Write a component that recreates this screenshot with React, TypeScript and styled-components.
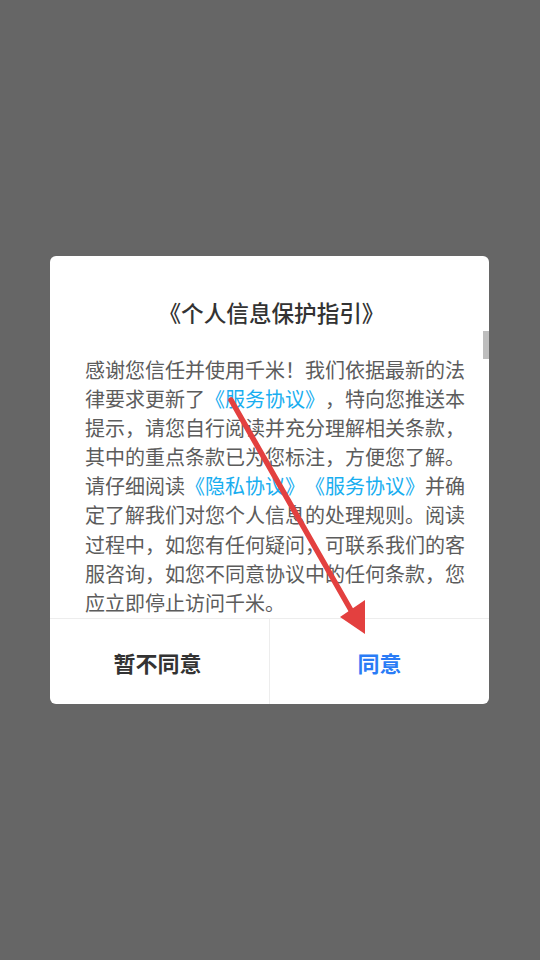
import React from 'react';
import styled, { createGlobalStyle } from 'styled-components';

const GlobalStyle = createGlobalStyle`
  html, body {
    margin: 0;
    padding: 0;
    background: #666666;
  }
  body {
    font-family: "Noto Sans CJK SC", "Noto Sans", sans-serif;
    text-spacing-trim: space-all;
  }
`;

const Screen = styled.div`
  width: 540px;
  height: 960px;
  display: flex;
  align-items: center;
  justify-content: center;
  position: relative;
  background: #666666;
`;

const Dialog = styled.div`
  width: 439px;
  height: 448px;
  margin-right: 1px;
  background: #ffffff;
  border-radius: 6px;
  display: flex;
  flex-direction: column;
  overflow: hidden;
  position: relative;
`;

const Title = styled.h2`
  margin: 0;
  padding: 41px 0 0 4px;
  height: 62px;
  box-sizing: border-box;
  text-align: center;
  font-size: 22.6px;
  line-height: 32px;
  font-weight: 500;
  color: #333333;
`;

const Body = styled.div`
  flex: 1;
  overflow: hidden;
  padding: 37px 24px 0 35px;
`;

const Text = styled.p`
  margin: 0;
  font-size: 20px;
  line-height: 29.1px;
  color: #5c5c5c;
  text-align: justify;
`;

const Link = styled.span`
  color: #19aef0;
`;

const ScrollThumb = styled.div`
  position: absolute;
  right: 0;
  top: 75px;
  width: 6px;
  height: 28px;
  background: #bdbdbd;
`;

const Footer = styled.div`
  height: 85px;
  flex-shrink: 0;
  display: grid;
  grid-template-columns: 219px 1fr;
  border-top: 1px solid #ededed;
`;

const ActionButton = styled.button<{ $primary?: boolean }>`
  border: none;
  background: transparent;
  font-family: inherit;
  font-size: 22px;
  font-weight: 700;
  padding: 0 ${p => (p.$primary ? '0' : '4px')} 0 0;
  color: ${p => (p.$primary ? '#2a7cf6' : '#333333')};
  border-left: ${p => (p.$primary ? '1px solid #ededed' : 'none')};
  cursor: pointer;
`;

const Arrow = styled.svg`
  position: absolute;
  left: 0;
  top: 0;
  pointer-events: none;
`;

export default function App() {
  return (
    <>
      <GlobalStyle />
      <Screen>
        <Dialog>
          <Title>《个人信息保护指引》</Title>
          <Body>
            <Text>
              感谢您信任并使用千米！我们依据最新的法律要求更新了
              <Link>《服务协议》</Link>，特向您推送本提示，请您自行阅读并充分理解相关条款，其中的重点条款已为您标注，方便您了解。请仔细阅读
              <Link>《隐私协议》《服务协议》</Link>
              并确定了解我们对您个人信息的处理规则。阅读过程中，如您有任何疑问，可联系我们的客服咨询，如您不同意协议中的任何条款，您应立即停止访问千米。
            </Text>
          </Body>
          <ScrollThumb />
          <Footer>
            <ActionButton>暂不同意</ActionButton>
            <ActionButton $primary>同意</ActionButton>
          </Footer>
        </Dialog>
        <Arrow width="540" height="960" viewBox="0 0 540 960">
          <line x1="231" y1="400" x2="352" y2="612" stroke="#e3403f" strokeWidth="5.5" strokeLinecap="round" />
          <polygon points="340,617 365,600 365,634" fill="#e3403f" />
        </Arrow>
      </Screen>
    </>
  );
}
